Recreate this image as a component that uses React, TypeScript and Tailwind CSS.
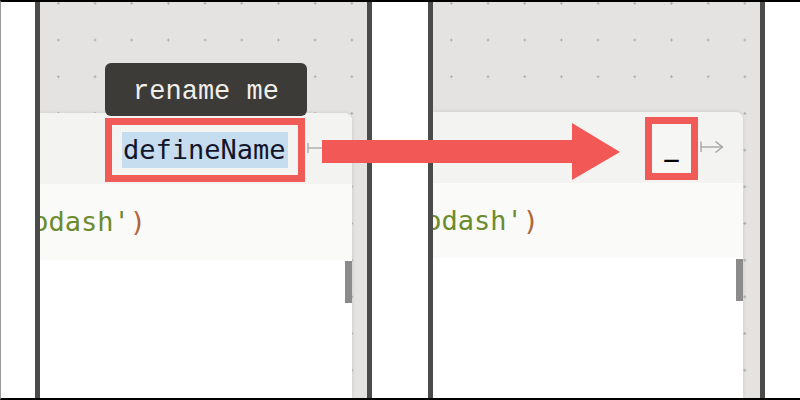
import React from "react";

const mono = "font-['DejaVu_Sans_Mono',monospace]";

type PanelProps = {
  top: string;
  cardMr: string;
  header: React.ReactNode;
  codeH: string;
};

const Panel = ({ top, cardMr, header, codeH }: PanelProps) => {
  return (
    <div
      className={`w-[337px] h-full shrink-0 border-x-[5px] border-[#4b4b4b] bg-[#e4e3e1] bg-[radial-gradient(circle,#a6a6a6_0.9px,transparent_1.4px)] bg-[length:36.7px_36.7px] bg-[position:0_-17px] overflow-hidden flex flex-col ${top}`}
    >
      <div
        className={`flex-1 flex flex-col bg-white rounded-tr-lg shadow-[0_0_4px_rgba(0,0,0,0.12)] ${cardMr}`}
      >
        <div className="bg-[#f3f3f1] rounded-tr-lg flex items-start h-[71px]">{header}</div>
        <div className={`bg-[#fafaf8] ${codeH}`}>
          <div className={`-ml-[24px] whitespace-nowrap text-[27px] leading-[76px] ${mono}`}>
            <span className="text-[#6b8b2e]">lodash'</span>
            <span className="text-[#b3653c]">)</span>
          </div>
        </div>
        <div className="flex-1 relative">
          <div className="absolute right-0 top-[1px] w-[7px] h-[42px] bg-[#8b8b8b]" />
        </div>
      </div>
    </div>
  );
};

export default function App() {
  return (
    <div className="w-[800px] h-[400px] bg-white border-t-2 border-b-2 border-black border-l border-l-[#9a9a9a] relative flex pl-[34px] overflow-hidden">
      <Panel
        top="pt-[111px]"
        cardMr="mr-[15px]"
        codeH="h-[76px]"
        header={
          <>
            <div className="ml-[65px] mt-[5px] w-[200px] h-[64px] border-[7px] border-[#f05a57] bg-[#f4f4f2] flex items-center pl-[10px]">
              <span
                className={`block h-[36px] leading-[36px] text-[27px] text-[#14142a] bg-[#c6dcef] pl-[1px] pr-[2px] ${mono}`}
              >
                defineName
              </span>
            </div>
            <svg width="16" height="12" viewBox="0 0 16 12" className="mt-[29px] ml-[2px]">
              <line x1="1" y1="1" x2="1" y2="11" stroke="#a0a0a0" strokeWidth="1.2" />
              <line x1="1" y1="6" x2="16" y2="6" stroke="#a0a0a0" strokeWidth="1.2" />
            </svg>
          </>
        }
      />
      <div className="w-[56px] shrink-0" />
      <Panel
        top="pt-[110px]"
        cardMr="mr-[17px]"
        codeH="h-[75px]"
        header={
          <>
            <div className="ml-[212px] mt-[5px] w-[53px] h-[63px] border-[7px] border-[#f05a57] bg-[#f6f6f4] flex justify-center">
              <span className={`block text-[24px] font-bold leading-[48px] text-black ${mono}`}>_</span>
            </div>
            <svg width="24" height="14" viewBox="0 0 24 14" className="mt-[28px] ml-[2px]">
              <line x1="1" y1="1.5" x2="1" y2="12" stroke="#a0a0a0" strokeWidth="1.3" />
              <line x1="1" y1="7" x2="22.5" y2="7" stroke="#a0a0a0" strokeWidth="1.3" />
              <polyline points="15.5,1.5 22.5,7 15.5,12.5" fill="none" stroke="#a0a0a0" strokeWidth="1.3" />
            </svg>
          </>
        }
      />

      {/* tooltip over left card */}
      <div className="absolute left-[104px] top-[61px] w-[202px] h-[53px] rounded-md bg-[#3c3b38] text-[#f1eee8] text-[27px] font-['Liberation_Mono',monospace] text-center pt-[6px] leading-[47px]">
        rename me
      </div>

      {/* big red arrow between panels */}
      <svg
        className="absolute left-[321px] top-[121px]"
        width="298"
        height="57"
        viewBox="0 0 298 57"
      >
        <polygon points="0,17 250,17 250,0 298,29 250,57 250,40 0,40" fill="#f25856" />
      </svg>
    </div>
  );
}
